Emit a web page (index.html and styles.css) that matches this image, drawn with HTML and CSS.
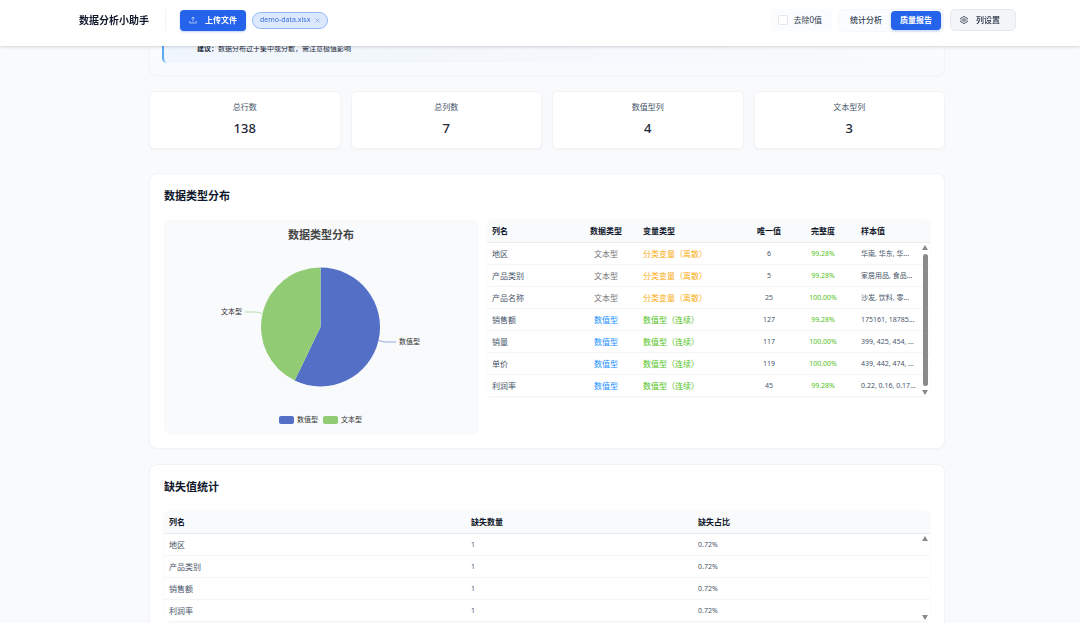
FILE: index.html
```html
<!DOCTYPE html>
<html lang="zh-CN">
<head>
  <meta charset="UTF-8">
  <meta name="viewport" content="width=device-width, initial-scale=1.0">
  <title>数据分析小助手</title>
  <link rel="stylesheet" href="styles.css">
</head>
<body>
  <header class="header">
    <div class="header-left">
      <h1 class="logo">数据分析小助手</h1>
      <button class="upload-button">
        <svg width="8" height="8" viewBox="0 0 16 16" fill="none" stroke="currentColor" stroke-width="1.2">
          <path d="M8 11V2M5 5l3-3 3 3M1.5 10v4h13v-4"></path>
        </svg>
        上传文件
      </button>
      <div class="file-tag">
        <span>demo-data.xlsx</span>
        <button class="file-remove" aria-label="移除文件">
          <svg width="5" height="5" viewBox="0 0 10 10" fill="none" stroke="currentColor" stroke-width="1.5">
            <path d="M1 1l8 8M9 1l-8 8"></path>
          </svg>
        </button>
      </div>
    </div>
    <div class="header-right">
      <label class="zero-filter"><input type="checkbox">去除0值</label>
      <div class="view-switch">
        <button class="view-button">统计分析</button>
        <button class="view-button active">质量报告</button>
      </div>
      <button class="settings-button">
        <svg width="8" height="8" viewBox="0 0 16 16" fill="none" stroke="currentColor" stroke-width="1.4" stroke-linejoin="round">
          <path d="M6.5 1h3l.5 2 1.5.9 2-.6L15 6l-1.4 1.3v1.4L15 10l-1.5 2.7-2-.6L10 13l-.5 2h-3L6 13l-1.5-.9-2 .6L1 10l1.4-1.3V7.3L1 6l1.5-2.7 2 .6L6 3z"></path>
          <circle cx="8" cy="8" r="2.5"></circle>
        </svg>
        列设置
      </button>
    </div>
  </header>

  <main class="container">
    <section class="panel insight-panel">
      <p class="insight"><strong>建议：</strong>数据分布过于集中或分散，需注意极值影响</p>
    </section>

    <div class="stats">
      <div class="stat-card">
        <div class="stat-label">总行数</div>
        <div class="stat-value">138</div>
      </div>
      <div class="stat-card">
        <div class="stat-label">总列数</div>
        <div class="stat-value">7</div>
      </div>
      <div class="stat-card">
        <div class="stat-label">数值型列</div>
        <div class="stat-value">4</div>
      </div>
      <div class="stat-card">
        <div class="stat-label">文本型列</div>
        <div class="stat-value">3</div>
      </div>
    </div>

    <!-- Column types -->
    <section class="panel">
      <h2 class="panel-title">数据类型分布</h2>
      <div class="type-grid">
        <div class="chart">
          <svg viewBox="0 0 315 214">
            <text class="chart-title" x="157" y="19" text-anchor="middle">数据类型分布</text>
            <path d="M156.5 107V47.5A59.5 59.5 0 1 1 130.7 160.6Z" fill="#5470c6"></path>
            <path d="M156.5 107L130.7 160.6A59.5 59.5 0 0 1 156.5 47.5Z" fill="#91cc75"></path>
            <path d="M215 120.5Q219 122 222 122H232" fill="none" stroke="#5470c6" stroke-width="0.6"></path>
            <path d="M98 93.5Q94 92 91 92H81" fill="none" stroke="#91cc75" stroke-width="0.6"></path>
            <text class="chart-label" x="235" y="124">数值型</text>
            <text class="chart-label" x="57" y="94">文本型</text>
            <rect x="115" y="196" width="15" height="8" rx="2" fill="#5470c6"></rect>
            <text class="chart-label" x="133" y="202">数值型</text>
            <rect x="159" y="196" width="15" height="8" rx="2" fill="#91cc75"></rect>
            <text class="chart-label" x="177" y="202">文本型</text>
          </svg>
        </div>
        <div class="table-wrap">
          <table class="type-table">
            <thead>
              <tr>
                <th class="col-name">列名</th>
                <th class="col-type center">数据类型</th>
                <th class="col-var">变量类型</th>
                <th class="col-unique center">唯一值</th>
                <th class="col-full center">完整度</th>
                <th>样本值</th>
              </tr>
            </thead>
            <tbody>
              <tr><td>地区</td><td class="center text">文本型</td><td class="category">分类变量（离散）</td><td class="center num">6</td><td class="center num good">99.28%</td><td class="num">华南, 华东, 华...</td></tr>
              <tr><td>产品类别</td><td class="center text">文本型</td><td class="category">分类变量（离散）</td><td class="center num">5</td><td class="center num good">99.28%</td><td class="num">家居用品, 食品...</td></tr>
              <tr><td>产品名称</td><td class="center text">文本型</td><td class="category">分类变量（离散）</td><td class="center num">25</td><td class="center num good">100.00%</td><td class="num">沙发, 饮料, 零...</td></tr>
              <tr><td>销售额</td><td class="center numeric">数值型</td><td class="good">数值型（连续）</td><td class="center num">127</td><td class="center num good">99.28%</td><td class="num">175161, 18785...</td></tr>
              <tr><td>销量</td><td class="center numeric">数值型</td><td class="good">数值型（连续）</td><td class="center num">117</td><td class="center num good">100.00%</td><td class="num">399, 425, 454, ...</td></tr>
              <tr><td>单价</td><td class="center numeric">数值型</td><td class="good">数值型（连续）</td><td class="center num">119</td><td class="center num good">100.00%</td><td class="num">439, 442, 474, ...</td></tr>
              <tr><td>利润率</td><td class="center numeric">数值型</td><td class="good">数值型（连续）</td><td class="center num">45</td><td class="center num good">99.28%</td><td class="num">0.22, 0.16, 0.17...</td></tr>
            </tbody>
          </table>
          <div class="scrollbar">
            <span class="arrow-up"></span>
            <span class="thumb"></span>
            <span class="arrow-down"></span>
          </div>
        </div>
      </div>
    </section>

    <!-- Missing values -->
    <section class="panel">
      <h2 class="panel-title">缺失值统计</h2>
      <div class="table-wrap">
        <table class="missing-table">
          <thead>
            <tr>
              <th class="col-missing-name">列名</th>
              <th class="col-missing-count">缺失数量</th>
              <th>缺失占比</th>
            </tr>
          </thead>
          <tbody>
            <tr><td>地区</td><td class="num">1</td><td class="num">0.72%</td></tr>
            <tr><td>产品类别</td><td class="num">1</td><td class="num">0.72%</td></tr>
            <tr><td>销售额</td><td class="num">1</td><td class="num">0.72%</td></tr>
            <tr><td>利润率</td><td class="num">1</td><td class="num">0.72%</td></tr>
          </tbody>
        </table>
        <div class="scrollbar">
          <span class="arrow-up"></span>
          <span class="arrow-down"></span>
        </div>
      </div>
    </section>
  </main>
</body>
</html>
```
FILE: styles.css
```css
* {
  box-sizing: border-box;
}

body {
  margin: 0;
  height: 100vh;
  overflow: hidden;
  background-color: #f9fafc;
  color: #1e293b;
  font-family: "Noto Sans", "Noto Sans CJK SC", sans-serif;
  font-size: 8px;
  line-height: 12px;
}

button {
  font-family: inherit;
  font-size: 8px;
  line-height: 12px;
  cursor: pointer;
}

.header {
  position: fixed;
  top: 0;
  left: 0;
  right: 0;
  z-index: 10;
  height: 46px;
  padding: 0 64px 6px 79px;
  display: flex;
  align-items: center;
  justify-content: space-between;
  background-color: white;
  box-shadow: 0 1px 3px rgba(0, 0, 0, 0.16);
}

.header-left,
.header-right {
  display: flex;
  align-items: center;
  gap: 6px;
}

.logo {
  margin: 0 8px 0 0;
  padding-right: 16px;
  border-right: 1px solid #f1f3f6;
  font-size: 10px;
  line-height: 20px;
  font-weight: 700;
  color: #0f172a;
}

.upload-button {
  display: flex;
  align-items: center;
  gap: 8px;
  height: 21px;
  padding: 0 9px;
  border: none;
  border-radius: 4px;
  background-color: #2563eb;
  color: white;
  font-weight: 700;
  box-shadow: 0 1px 2px rgba(37, 99, 235, 0.3);
}

.file-tag {
  display: flex;
  align-items: center;
  gap: 5px;
  height: 17px;
  padding: 0 7px;
  border: 1px solid #93b8f8;
  border-radius: 9px;
  background-color: #dbe8fd;
  color: #3b6fe0;
  font-size: 7px;
}

.file-remove {
  display: flex;
  padding: 0;
  border: none;
  background: none;
  color: #7fa3ef;
}

.zero-filter {
  display: flex;
  align-items: center;
  gap: 5px;
  height: 22px;
  padding: 0 10px 0 7px;
  border-radius: 4px;
  background-color: #fbfcfd;
  color: #334155;
}

.zero-filter input {
  appearance: none;
  width: 10px;
  height: 10px;
  margin: 0;
  border: 1px solid #e5e7eb;
  border-radius: 2px;
  background-color: white;
}

.view-switch {
  display: flex;
  align-items: center;
  height: 23px;
  padding: 0 2px;
  border: 1px solid #f6f8fa;
  border-radius: 4px;
  background-color: #fbfcfd;
}

.view-button {
  height: 19px;
  padding: 0 9px;
  border: none;
  border-radius: 4px;
  background: none;
  color: #334155;
  font-weight: 500;
}

.view-button.active {
  background-color: #2563eb;
  color: white;
  font-weight: 700;
  box-shadow: 0 1px 3px rgba(37, 99, 235, 0.3);
}

.settings-button {
  display: flex;
  align-items: center;
  gap: 8px;
  height: 22px;
  padding: 0 15px 0 9px;
  border: 1px solid #e5e9ef;
  border-radius: 5px;
  background-color: #f3f5f9;
  color: #1e293b;
  font-weight: 500;
}

.container {
  padding: 22px 135px 0 149px;
}

.panel {
  margin-bottom: 15px;
  padding: 14px;
  border: 1px solid #f1f3f6;
  border-radius: 8px;
  background-color: white;
  box-shadow: 0 1px 3px rgba(0, 0, 0, 0.02);
}

.panel-title {
  margin: 0 0 16px;
  font-size: 11px;
  line-height: 16px;
  font-weight: 700;
  color: #0f172a;
}

.insight-panel {
  padding: 12px;
  background-color: #fafbfc;
}

.insight {
  margin: 0;
  padding: 8px 33px;
  border-left: 2px solid #5aa9f5;
  border-radius: 5px;
  background: linear-gradient(90deg, #f0f6fd, #f9fafc);
  font-size: 7px;
}

.stats {
  display: grid;
  grid-template-columns: repeat(4, 1fr);
  gap: 10px;
  margin-bottom: 24px;
}

.stat-card {
  padding: 9px 10px 11px;
  border: 1px solid #f1f3f6;
  border-radius: 5px;
  background-color: white;
  box-shadow: 0 1px 2px rgba(0, 0, 0, 0.03);
  text-align: center;
}

.stat-label {
  margin-bottom: 6px;
  color: #475569;
}

.stat-value {
  font-size: 13px;
  line-height: 18px;
  font-weight: 500;
}

.type-grid {
  display: grid;
  grid-template-columns: 315fr 443fr;
  align-items: start;
  gap: 8px;
}

.chart {
  border-radius: 5px;
  background-color: #f9fafc;
}

.chart svg {
  display: block;
  width: 100%;
}

.chart-title {
  font-size: 11px;
  font-weight: 700;
  fill: #464646;
}

.chart-label {
  font-size: 7px;
  fill: #333;
}

.table-wrap {
  position: relative;
  min-width: 0;
  border-radius: 5px;
  box-shadow: 0 0 0 1px #fafbfc;
  overflow: hidden;
}

table {
  width: 100%;
  table-layout: fixed;
  border-collapse: separate;
  border-spacing: 0;
}

th,
td {
  height: 22px;
  padding: 0 5px;
  border-bottom: 1px solid #f4f5f7;
  text-align: left;
  white-space: nowrap;
}

th {
  height: 23px;
  background-color: #f9fafc;
  border-bottom-color: #e8ebef;
  color: #0f172a;
  font-weight: 700;
}

td {
  color: #475569;
}

.col-name {
  width: 87px;
}

.col-type {
  width: 64px;
}

.col-var {
  width: 110px;
}

.col-unique {
  width: 42px;
}

.col-full {
  width: 66px;
}

.col-missing-name {
  width: 302px;
}

.col-missing-count {
  width: 227px;
}

.center {
  text-align: center;
}

.num {
  font-size: 7px;
}

.text {
  color: #737373;
}

.category {
  color: #faad14;
}

.numeric {
  color: #1890ff;
}

.good {
  color: #52c41a;
}

.scrollbar {
  position: absolute;
  top: 25px;
  right: 2px;
  bottom: 2px;
  width: 6px;
  display: flex;
  flex-direction: column;
  align-items: center;
  justify-content: space-between;
  gap: 4px;
}

.arrow-up,
.arrow-down {
  border-left: 3px solid transparent;
  border-right: 3px solid transparent;
}

.arrow-up {
  border-bottom: 5px solid #8a8a8a;
}

.arrow-down {
  border-top: 5px solid #8a8a8a;
}

.thumb {
  flex: 1;
  width: 5px;
  border-radius: 3px;
  background-color: #8a8a8a;
}
```
